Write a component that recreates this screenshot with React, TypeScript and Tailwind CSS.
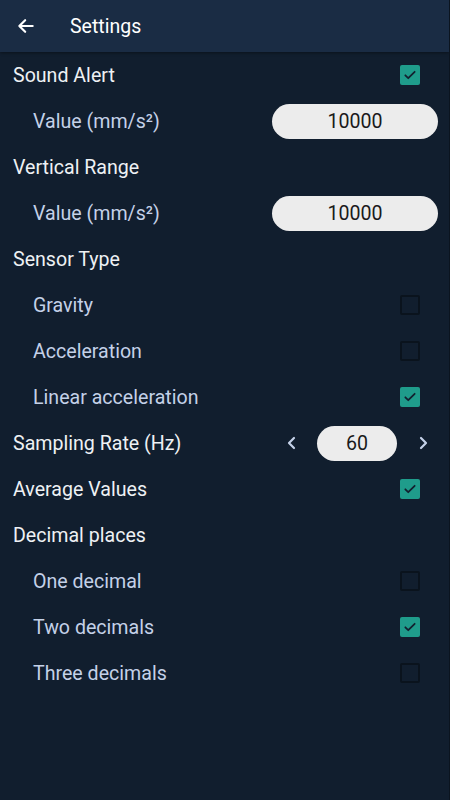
import React from "react";

const Check = ({ checked }: { checked: boolean }) =>
  checked ? (
    <div className="w-[20px] h-[20px] rounded-[2px] bg-[#1f9c8b] flex items-center justify-center">
      <svg width="14" height="14" viewBox="0 0 24 24" fill="none" stroke="#13202f" strokeWidth="3" strokeLinecap="round" strokeLinejoin="round">
        <path d="M4 12.5l5 5L20 6.5" />
      </svg>
    </div>
  ) : (
    <div className="w-[20px] h-[20px] rounded-[2px] border-2 border-[#0a131d]" />
  );

const Main = ({ children, right }: { children: React.ReactNode; right?: React.ReactNode }) => (
  <div className="h-[46px] flex items-center justify-between pl-[13px] pr-[29px] text-[19.6px] text-[#eef1f4]">
    <span className="pt-[2px]">{children}</span>
    {right}
  </div>
);

const Sub = ({ children, right, pr = "pr-[29px]" }: { children: React.ReactNode; right?: React.ReactNode; pr?: string }) => (
  <div className={`h-[46px] flex items-center justify-between pl-[33px] ${pr} text-[19.6px] text-[#c4d1e8]`}>
    <span className="pt-[2px]">{children}</span>
    {right}
  </div>
);

const Pill = ({ value }: { value: string }) => (
  <div className="w-[166px] h-[35px] rounded-full bg-[#ececec] flex items-center justify-center text-[19.6px] text-[#1a1a1a]">
    <span className="pt-[1px]">{value}</span>
  </div>
);

export default function App() {
  return (
    <div className="w-[450px] h-[800px] bg-[#111e2e] overflow-hidden border-r border-[#0b141f]" style={{ fontFamily: "Roboto, 'Liberation Sans', sans-serif" }}>
      <div className="h-[52px] bg-[#1a2c44] flex items-center shadow-[0_1px_3px_rgba(0,0,0,0.4)]">
        <svg className="ml-[16px]" width="20" height="20" viewBox="0 0 24 24" fill="none" stroke="#ffffff" strokeWidth="2.6" strokeLinecap="round" strokeLinejoin="round">
          <path d="M20 12H4M11 5l-7 7 7 7" />
        </svg>
        <span className="ml-[34px] text-[19.5px] text-white pt-[1px]">Settings</span>
      </div>
      <Main right={<Check checked />}>Sound Alert</Main>
      <Sub pr="pr-[11px]" right={<Pill value="10000" />}>Value (mm/s²)</Sub>
      <Main>Vertical Range</Main>
      <Sub pr="pr-[11px]" right={<Pill value="10000" />}>Value (mm/s²)</Sub>
      <Main>Sensor Type</Main>
      <Sub right={<Check checked={false} />}>Gravity</Sub>
      <Sub right={<Check checked={false} />}>Acceleration</Sub>
      <Sub right={<Check checked />}>Linear acceleration</Sub>
      <div className="h-[46px] flex items-center justify-between pl-[13px] pr-[20px] text-[19.6px] text-[#eef1f4]">
        <span className="pt-[2px]">Sampling Rate (Hz)</span>
        <div className="flex items-center">
          <svg width="12" height="14" viewBox="0 0 12 14" fill="none" stroke="#c4d1e8" strokeWidth="2.2" strokeLinecap="round" strokeLinejoin="round">
            <path d="M8 2L3 7l5 5" />
          </svg>
          <div className="ml-[19px] w-[80px] h-[35px] rounded-full bg-[#ececec] flex items-center justify-center text-[19.6px] text-[#1a1a1a]">
            <span className="pt-[1px]">60</span>
          </div>
          <svg className="ml-[20px]" width="12" height="14" viewBox="0 0 12 14" fill="none" stroke="#c4d1e8" strokeWidth="2.2" strokeLinecap="round" strokeLinejoin="round">
            <path d="M4 2l5 5-5 5" />
          </svg>
        </div>
      </div>
      <Main right={<Check checked />}>Average Values</Main>
      <Main>Decimal places</Main>
      <Sub right={<Check checked={false} />}>One decimal</Sub>
      <Sub right={<Check checked />}>Two decimals</Sub>
      <Sub right={<Check checked={false} />}>Three decimals</Sub>
    </div>
  );
}
